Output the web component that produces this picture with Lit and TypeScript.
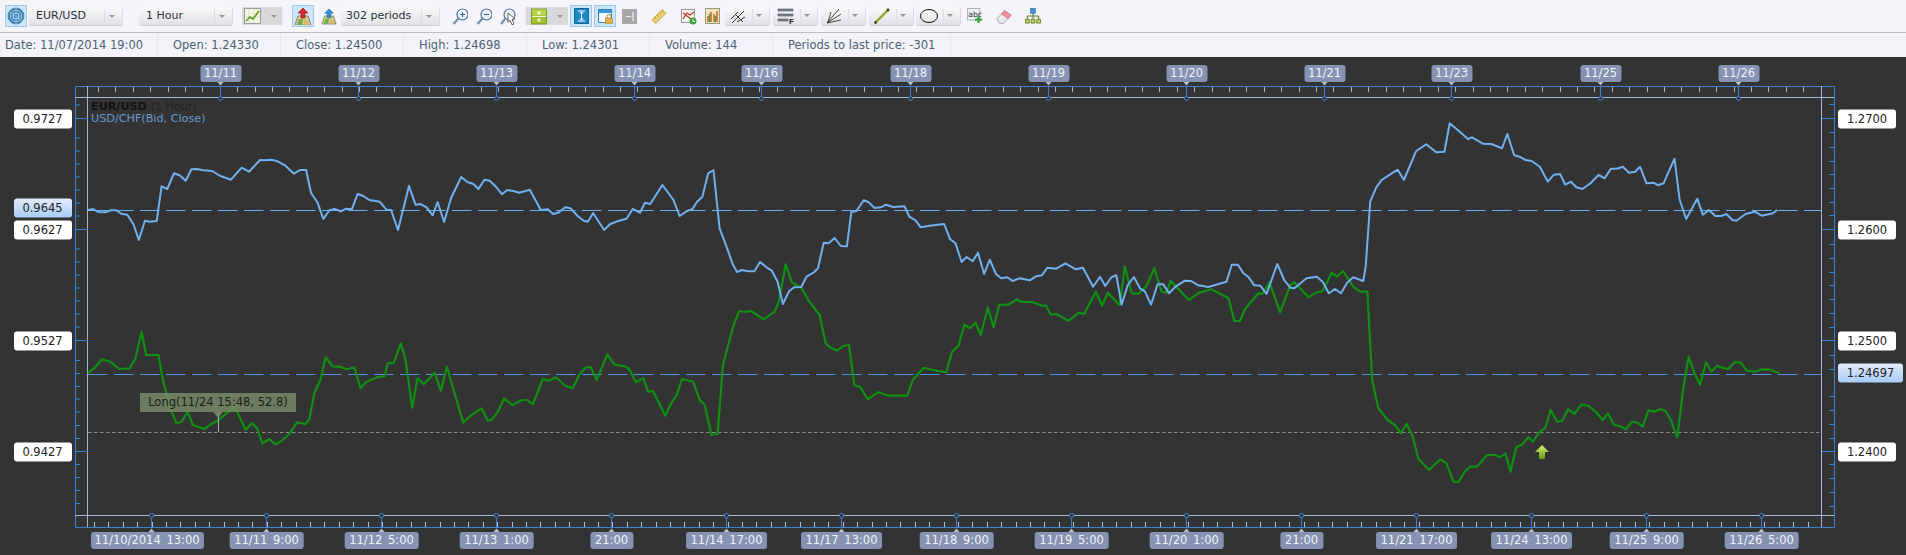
import { LitElement, css, html, svg } from 'lit';
import { customElement } from 'lit/decorators.js';

type Pt = [number, number];

// series were read off crops: 2.45x (or 2.465x on the right side) horizontally, 3x vertically
const crop = (ox: number, oy: number, pts: number[], sx = 2.45): Pt[] => {
  const out: Pt[] = [];
  for (let i = 0; i < pts.length; i += 2) out.push([ox + pts[i] / sx, oy + pts[i + 1] / 3]);
  return out;
};

const BLUE: Pt[] = [
  ...crop(0, 130, [215,240,228,237,240,246,258,247,272,241,285,241,297,251,312,254,327,283,340,330,355,272,367,275,384,273,396,169,410,177,426,130,440,136,455,152,469,118,482,117,498,121,520,123,540,138,566,149,592,113,610,125,637,90,650,91,665,89,680,94,698,106,720,131,735,120,750,120,762,188,778,218,792,267,807,241,820,237,835,244,848,236,862,238,876,192,890,198,905,210,930,215,947,239,958,240,975,300,1002,168,1018,224,1030,222,1045,232,1060,256,1072,216,1088,276,1105,205,1130,141,1145,156,1160,162,1172,177,1187,149,1200,152,1215,170,1230,193,1243,180,1258,183,1272,188,1298,179,1325,240,1342,238,1355,252,1368,248,1385,232,1398,235,1415,258,1430,272,1440,275,1453,249,1480,300,1495,282,1515,273,1535,266,1550,237,1568,248]),
  ...crop(640, 130, [12,218,25,222,55,165,82,210,97,258,115,243,128,238,140,215,153,200,167,130,180,120,195,295,212,350,228,405,238,426,250,420,265,424,280,424,294,396,310,412,323,422,337,455,350,522,365,484,378,472,395,471,408,440,425,428,436,415,450,338,462,340,477,324,492,348,507,349,518,245,530,244,548,211,560,217,575,234,590,232,603,224,620,231,648,229,660,260,675,271,688,292,710,287,745,282,760,328,773,340,788,396,800,381,815,394,828,368,843,432,857,389,872,432,885,445,900,442,913,453,930,445,955,451,970,439,985,436,998,413,1020,416,1042,400,1068,418,1085,413,1110,470,1127,440,1140,468,1155,442,1167,436,1180,524,1195,465,1210,441,1225,475,1237,484,1252,524,1268,463,1282,463,1296,490,1312,470,1335,452,1350,453,1368,466,1392,471,1437,455,1450,404,1465,404,1478,430,1490,440,1505,466,1520,467,1535,492]),
  ...crop(1270, 100, [18,492,35,540,50,563,60,565,90,535,115,530,130,545,145,580,160,567,175,580,190,548,205,532,230,543,236,500,247,305,262,262,275,240,300,220,315,209,330,240,360,154,385,133,410,157,430,155,443,70,465,92,488,117,498,112,525,131,545,132,572,145,585,102,602,166,615,170,630,180,645,183,665,200,685,245,700,224,715,222,728,254,742,245,755,262,770,267,790,250,810,225,825,235,840,206,855,206,870,200,885,218,900,215,912,200,928,250,945,248,957,256,970,250,997,176,1010,300,1026,357,1053,296,1067,344,1082,330,1098,348,1112,348,1125,342,1140,360,1150,362,1172,342,1195,335,1212,347,1240,340,1250,330], 2.465),
];

const GREEN: Pt[] = [
  ...crop(0, 345, [215,85,232,68,250,43,270,50,292,72,318,70,332,40,347,-40,358,30,388,30,400,110,418,190,432,235,445,230,460,200,472,240,485,245,500,252,517,238,535,225,575,185,602,255,617,234,630,250,643,295,660,282,675,298,690,288,708,268,728,232,748,238,758,222,770,145,785,105,798,37,815,64,833,65,850,73,868,67,883,130,898,110,925,96,942,94,950,55,965,53,982,-5,993,40,1010,188,1023,100,1038,118,1065,83,1080,137,1095,65,1110,130,1135,233,1155,210,1180,190,1195,227,1205,224,1220,200,1235,160,1255,180,1280,165,1292,165,1305,178,1330,102,1345,107,1362,97,1385,122,1403,130,1420,88,1435,68,1447,66,1462,105,1488,28,1505,58,1530,64,1540,70,1558,112]),
  ...crop(640, 345, [8,100,20,140,32,138,62,212,75,178,90,150,103,102,130,110,147,167,158,178,175,270,190,267,203,60]),
  ...crop(640, 130, [228,590,243,543,258,546,272,543,303,568,330,545,340,515,357,403,372,457,395,473,415,515,440,555,455,640]),
  ...crop(640, 345, [463,5,483,17,497,3,512,0,525,120,540,127,558,163,583,142,610,152,655,152,668,105,695,68,725,77,750,82,765,20,780,2]),
  ...crop(640, 130, [795,583,808,595,822,578,835,615,852,533,866,592,880,525,905,523,922,508,935,516,960,516,985,527,995,527,1007,554,1020,552,1050,573,1075,548,1088,552,1117,485,1132,527,1146,488,1175,525,1188,410,1205,490,1220,492,1240,470,1260,415,1278,485,1290,488,1300,453,1345,510,1370,488,1400,478,1442,505,1456,573,1470,573,1482,538,1515,490,1525,492,1542,457]),
  ...crop(1270, 100, [25,637,50,555,60,547,95,592,110,580,130,573,152,518,165,530,180,513,205,560,222,575,240,575], 2.465),
  ...crop(1270, 330, [245,0,252,150,267,235,290,270,308,285,323,310,337,282,352,320,365,385,392,420,420,388,435,400,452,455,465,456,480,425,493,410,510,410,535,375,555,375,567,382,580,370,593,425,607,352,620,345,637,322,648,335,665,305,678,295,692,240,708,275,720,273,735,237,750,252,768,223,785,228,805,248,820,270,833,250,848,285,862,288,877,298,892,275,905,278,919,290,933,240,948,245,962,237,975,243,988,270,1004,323,1018,180,1032,80,1045,125,1060,165,1075,97,1088,125,1102,107,1115,113,1130,117,1145,97,1160,97,1175,122,1195,125,1212,118,1230,118,1255,130], 2.465),
];

const LEFT_TICKS = [105,138,151,164,177,190,203,216,249,262,275,288,301,314,327,360.5,373.5,386.5,399,412,425.5,438.5,464.5,477.5,490.5,503.5];
const LEFT_VALUES: [string, number, boolean][] = [['0.9727',118.5,false],['0.9645',208,true],['0.9627',229.5,false],['0.9527',340.5,false],['0.9427',451.5,false]];
const RIGHT_TICKS = [104.5,132.5,147.5,161.5,174.5,188.5,202.5,215.5,244.5,258.5,272.5,285.5,299.5,313.5,327.5,355.5,369.5,396.5,410.5,424.5,438.5,464.5,478.5,492.5,506.5];
const RIGHT_VALUES: [string, number, boolean][] = [['1.2700',118.5,false],['1.2600',229.5,false],['1.2500',340.5,false],['1.24697',372.5,true],['1.2400',451.5,false]];
const TOP_LABELS: [string, number][] = [['11/11',220.5],['11/12',358.5],['11/13',496.5],['11/14',634.5],['11/16',761.5],['11/18',910.5],['11/19',1048.5],['11/20',1186.5],['11/21',1324.5],['11/23',1451.5],['11/25',1600.5],['11/26',1738.5]];
const BOTTOM_LABELS: [string, number][] = [['11/10/2014 13:00',151.5],['11/11 9:00',266.5],['11/12 5:00',381.5],['11/13 1:00',496.5],['21:00',611.5],['11/14 17:00',726.5],['11/17 13:00',841.5],['11/18 9:00',956.5],['11/19 5:00',1071.5],['11/20 1:00',1186.5],['21:00',1301.5],['11/21 17:00',1416.5],['11/24 13:00',1531.5],['11/25 9:00',1646.5],['11/26 5:00',1761.5]];

const steps = (from: number, to: number, step: number) => {
  const out: number[] = [];
  for (let v = from; v < to; v += step) out.push(Math.round(v) + 0.5);
  return out;
};
const toPoints = (pts: Pt[]) => pts.map(([x, y]) => `${x.toFixed(1)},${y.toFixed(1)}`).join(' ');

const ICONS = {
  globe: svg`<circle cx="9" cy="9" r="8" fill="#3f7fb5" stroke="#6f8fa8"/><circle cx="9" cy="9" r="5.5" fill="none" stroke="#a9d3ea" stroke-width="1"/><circle cx="9" cy="9" r="3" fill="none" stroke="#c9e4f2" stroke-width="1"/><path d="M3 5l12 9M9 1v16" stroke="#8cc0de" stroke-width=".8"/>`,
  line: svg`<rect x=".5" y=".5" width="16" height="15" fill="#f4f6e4" stroke="#9a9a9a"/><path d="M1 9h15M5 1v14M10 1v14" stroke="#d5d8c4" stroke-width=".7"/><path d="M2 13l4-4 3 2 6-8" fill="none" stroke="#5c9a1e" stroke-width="1.6"/>`,
  mapUp: svg`<path d="M1 18l3-9h10l3 9z" fill="#d6c98c" stroke="#7b8a6a"/><path d="M3 18l2-6h4l-1 6z" fill="#6fae4b"/><path d="M11 18l-1-5h3l2 5z" fill="#d9b56a"/><path d="M9 1l5 5h-3v5H7V6H4z" fill="#d8262c" stroke="#8e1a1a" stroke-width=".6"/>`,
  mapBlue: svg`<path d="M1 18l3-9h10l3 9z" fill="#d6c98c" stroke="#7b8a6a"/><path d="M3 18l2-6h4l-1 6z" fill="#6fae4b"/><path d="M11 18l-1-5h3l2 5z" fill="#d9b56a"/><path d="M9 1l5 5h-3v5H7V6H4z" fill="#2f8fd0" stroke="#1c5f92" stroke-width=".6"/>`,
  zoomIn: svg`<circle cx="10.5" cy="6.5" r="5.5" fill="#eef3fa" stroke="#4f6f9c" stroke-width="1.2"/><path d="M8 6.5h5M10.5 4v5" stroke="#3f6396" stroke-width="1.1"/><path d="M6.5 10.5L1.5 16" stroke="#7d8ea8" stroke-width="2.2"/>`,
  zoomOut: svg`<circle cx="10.5" cy="6.5" r="5.5" fill="#eef3fa" stroke="#4f6f9c" stroke-width="1.2"/><path d="M8 6.5h5" stroke="#3f6396" stroke-width="1.1"/><path d="M6.5 10.5L1.5 16" stroke="#7d8ea8" stroke-width="2.2"/>`,
  zoomFit: svg`<circle cx="9.5" cy="6.5" r="5.5" fill="#eef3fa" stroke="#4f6f9c" stroke-width="1.2"/><path d="M5.5 10.5L1 16" stroke="#7d8ea8" stroke-width="2.2"/><path d="M8 5l7 6-3 .5 2 4.5-2 .8-2-4.5-2 2z" fill="#fff" stroke="#333" stroke-width=".8"/>`,
  split: svg`<rect x=".5" y="1" width="15" height="15" fill="#9fc02f" stroke="#7c9a1f"/><rect x="1" y="1.5" width="14" height="6" fill="#b6d44a"/><path d="M1 8.5h14" stroke="#f4f4e0" stroke-width="1"/><path d="M6 5h4M8 3v4M6 12h4M8 10v4" stroke="#fff" stroke-width="1"/>`,
  fit: svg`<rect x=".5" y=".5" width="14" height="15" fill="#1c88c4" stroke="#0f679b"/><path d="M4 3h7M4 13h7M7.5 4v8M5.8 5.5l1.7-1.7 1.7 1.7M5.8 10.5l1.7 1.7 1.7-1.7" fill="none" stroke="#fff" stroke-width="1"/>`,
  lock: svg`<rect x=".5" y="1.5" width="13" height="13" fill="#f6fbff" stroke="#2f86c4"/><rect x="1" y="2" width="12" height="3" fill="#3f98d4"/><path d="M9 10V8.5a2 2 0 014 0V10" fill="none" stroke="#a9812a"/><rect x="7.5" y="10" width="7" height="6" fill="#e3b04b" stroke="#a9812a" stroke-width=".6"/>`,
  panel: svg`<rect x="0" y="0" width="15" height="15" fill="#a7a7a7"/><path d="M4 7.5h5M11 3v9" stroke="#f2f2f2" stroke-width="1.2"/>`,
  ruler: svg`<path d="M1 12L12 1l4 4L5 16z" fill="#ecd26a" stroke="#b3952e" stroke-width=".8"/><path d="M4 9.5l1.5 1.5M6.5 7l1.5 1.5M9 4.5l1.5 1.5M11.5 2.5L13 4" stroke="#8a7420" stroke-width=".8"/>`,
  cross: svg`<rect x=".5" y="1.5" width="13" height="13" fill="#f3f3ec" stroke="#9c9c9c"/><path d="M2 5l8 6M2 11l4-6 3 2 4-3" fill="none" stroke="#c0392b" stroke-width="1.2"/><circle cx="12" cy="13" r="3.5" fill="#3da53d"/><path d="M12 11v2.5h2" fill="none" stroke="#fff" stroke-width=".9"/>`,
  bars: svg`<rect x=".5" y=".5" width="14" height="15" fill="#ece6bf" stroke="#9a9a80"/><path d="M3 14V8M6 14V4M9 14V6M12 14V3" stroke="#d06a2a" stroke-width="1.6"/><path d="M4.5 14V6M10.5 14V8" stroke="#4d9a3a" stroke-width="1.4"/>`,
  fork: svg`<path d="M3 16L15 4M6 7l8 8M2 12l7-7M8 15l8-5" fill="none" stroke="#333" stroke-width="1"/>`,
  lines: svg`<path d="M1 2h15v2H1zM1 7h15v2H1zM1 12h10v2H1z" fill="#7f8a96" stroke="#44505c" stroke-width=".6"/><text x="12" y="17" font-size="8" font-weight="700" font-family="Liberation Sans" fill="#222">F</text>`,
  fan: svg`<path d="M2 16L14 2M2 16L16 7M2 16L16 13M6 5l-3 10" fill="none" stroke="#333" stroke-width=".9"/>`,
  pencil: svg`<path d="M2 16L15 3" stroke="#8fa624" stroke-width="2.4"/><circle cx="2.5" cy="15.5" r="1.4" fill="#3a4a10"/><circle cx="15" cy="3" r="1.4" fill="#3a4a10"/>`,
  ellipse: svg`<ellipse cx="9" cy="9" rx="8.5" ry="6.5" fill="none" stroke="#111" stroke-width="1"/>`,
  abc: svg`<rect x=".5" y=".5" width="14" height="13" fill="#eef2f6" stroke="#a4adb8"/><text x="1.5" y="10" font-size="8.5" font-family="DejaVu Sans" fill="#222">abc</text><path d="M13 9v8M9 13h8" stroke="#3da53d" stroke-width="2.6"/>`,
  eraser: svg`<path d="M1 11l8-9 7 5-8 9H4z" fill="#eaeaee" stroke="#a9a9b3"/><path d="M9 2l7 5-3 4-7-5z" fill="#ee8f9b" stroke="#c76a78" stroke-width=".6"/>`,
  tree: svg`<rect x="6" y="0" width="5" height="5" fill="#3f8fd8" stroke="#21629f" stroke-width=".6"/><path d="M8.5 5v3M2.5 11V8h12v3M8.5 8v3" fill="none" stroke="#54701c"/><path d="M.5 11.5h4v4h-4zM6.5 11.5h4v4h-4zM12.5 11.5h4v4h-4z" fill="#c3d45a" stroke="#5c7a1a" stroke-width=".9"/>`,
};

const icon = (body: unknown, w = 18, h = 18) => html`<svg width=${w} height=${h} viewBox="0 0 ${w} ${h}">${body}</svg>`;
const caret = html`<span class="caret"></span>`;

@customElement('tool-bar')
export class ToolBar extends LitElement {
  static override styles = css`
    :host {
      display: flex;
      align-items: center;
      height: 32px;
      padding-left: 5px;
      background: #f5f4fa;
      border-bottom: 1px solid #bdbcc6;
      box-sizing: content-box;
      font: 11px 'DejaVu Sans', sans-serif;
      color: #2c3038;
    }
    .btn, .active, .flat, .combo, .split, .pick {
      display: flex;
      align-items: center;
      justify-content: center;
      flex: none;
      height: 19px;
      box-sizing: border-box;
    }
    .active {
      width: 22px;
      height: 22px;
      background: #cfe6fa;
      border: 1px solid #9ccbf0;
    }
    .flat { width: 16px; }
    .combo, .split {
      background: linear-gradient(#f9f9fb, #e2e2e6);
      border-bottom: 1px solid #cfcfd4;
      border-right: 1px solid #dcdce0;
      border-radius: 2px;
    }
    .combo { width: 94px; justify-content: flex-start; padding-left: 7px; position: relative; }
    .wide { width: 99px; padding-left: 5px; }
    .combo .caret { position: absolute; right: 7px; top: 8px; }
    .combo::after {
      content: '';
      position: absolute;
      right: 17px;
      top: 2px;
      bottom: 1px;
      width: 1px;
      background: #dcdce2;
    }
    .split { width: 45px; justify-content: space-between; padding: 0 7px 0 4px; position: relative; }
    .split::after {
      content: '';
      position: absolute;
      left: 27px;
      top: 2px;
      bottom: 1px;
      width: 1px;
      background: #dcdce2;
    }
    .pick {
      justify-content: space-between;
      padding: 0 5px 0 2px;
      background: #d9d9dc;
      height: 18px;
    }
    .pick-wide { width: 40px; }
    .pick-green { width: 42px; padding-left: 5px; }
    .caret {
      width: 0;
      height: 0;
      border: 3px solid transparent;
      border-top: 3px solid #94949b;
      border-bottom: 0;
      flex: none;
    }
    .m2 { margin-left: 2px; }
    .m3 { margin-left: 3px; }
    .m4 { margin-left: 4px; }
    .m5 { margin-left: 5px; }
    .m6 { margin-left: 6px; }
    .m7 { margin-left: 7px; }
    .m8 { margin-left: 8px; }
    .m9 { margin-left: 9px; }
    .m10 { margin-left: 10px; }
    .m12 { margin-left: 12px; }
    .m13 { margin-left: 13px; }
    .m14 { margin-left: 14px; }
    .m16 { margin-left: 16px; }
  `;

  override render() {
    return html`
      <span class="active">${icon(ICONS.globe)}</span>
      <span class="combo m2">EUR/USD${caret}</span>
      <span class="combo m16">1 Hour${caret}</span>
      <span class="pick pick-wide m9">${icon(ICONS.line, 17, 16)}${caret}</span>
      <span class="active m10">${icon(ICONS.mapUp)}</span>
      <span class="flat m7">${icon(ICONS.mapBlue)}</span>
      <span class="combo wide m4">302 periods${caret}</span>
      <span class="flat m12">${icon(ICONS.zoomIn, 16, 17)}</span>
      <span class="flat m8">${icon(ICONS.zoomOut, 16, 17)}</span>
      <span class="flat m8">${icon(ICONS.zoomFit, 16, 17)}</span>
      <span class="pick pick-green m10">${icon(ICONS.split, 16, 17)}${caret}</span>
      <span class="active m2">${icon(ICONS.fit, 15, 16)}</span>
      <span class="active m2">${icon(ICONS.lock, 15, 16)}</span>
      <span class="flat m5">${icon(ICONS.panel, 15, 15)}</span>
      <span class="flat m14">${icon(ICONS.ruler, 17, 17)}</span>
      <span class="flat m14">${icon(ICONS.cross, 16, 17)}</span>
      <span class="flat m7">${icon(ICONS.bars, 15, 16)}</span>
      <span class="split m5">${icon(ICONS.fork)}${caret}</span>
      <span class="split m3">${icon(ICONS.lines)}${caret}</span>
      <span class="split m3">${icon(ICONS.fan)}${caret}</span>
      <span class="split m3">${icon(ICONS.pencil)}${caret}</span>
      <span class="split m2">${icon(ICONS.ellipse)}${caret}</span>
      <span class="flat m6">${icon(ICONS.abc)}</span>
      <span class="flat m13">${icon(ICONS.eraser, 17, 17)}</span>
      <span class="flat m13">${icon(ICONS.tree, 17, 17)}</span>
    `;
  }
}

@customElement('info-bar')
export class InfoBar extends LitElement {
  static override styles = css`
    :host {
      display: grid;
      grid-template-columns: 158px repeat(5, 123px) 178px;
      justify-content: start;
      height: 24px;
      background: #f3f3f9;
      font: 11.5px 'DejaVu Sans', sans-serif;
      color: #4c5f74;
    }
    span {
      display: flex;
      align-items: center;
      padding-left: 15px;
      border-right: 1px solid #e7e7ee;
      white-space: nowrap;
    }
    span:first-child { padding-left: 5px; }
  `;

  override render() {
    return html`
      <span>Date: 11/07/2014 19:00</span>
      <span>Open: 1.24330</span>
      <span>Close: 1.24500</span>
      <span>High: 1.24698</span>
      <span>Low: 1.24301</span>
      <span>Volume: 144</span>
      <span>Periods to last price: -301</span>
    `;
  }
}

@customElement('price-chart')
export class PriceChart extends LitElement {
  static override styles = css`
    :host {
      display: block;
      position: relative;
      height: 498px;
      background: #333333;
      font: 11.5px 'DejaVu Sans', sans-serif;
      overflow: hidden;
    }
    svg { display: block; position: absolute; left: 0; top: 0; }
    .tag, .value, .tip, .legend { position: absolute; white-space: nowrap; }
    .tag {
      height: 17px;
      line-height: 17px;
      padding: 0 5px;
      transform: translateX(-50%);
      background: #8592b1;
      border-radius: 3px;
      color: #f2f4f8;
      word-spacing: 2px;
    }
    .first { padding: 0 4px; transform: translateX(calc(-50% - 4.5px)); }
    .top { width: 41px; padding: 0; text-align: center; box-sizing: border-box; }
    .value {
      width: 58px;
      height: 19px;
      line-height: 19px;
      text-align: center;
      background: #ffffff;
      border-radius: 3px;
      color: #222222;
      transform: translateY(-50%);
    }
    .current { background: linear-gradient(#e3edfc, #a8cbf9); }
    .wide { width: 65px; }
    .legend {
      left: 91px;
      top: 44px;
      font-size: 11.2px;
      line-height: 12px;
      color: #6798cf;
    }
    .legend b { color: #111111; }
    .legend i { font-style: normal; color: #222222; }
    .tip {
      left: 140px;
      top: 336px;
      width: 156px;
      height: 19px;
      line-height: 19px;
      text-align: center;
      background: rgba(124, 142, 106, 0.8);
      color: #1b2015;
    }
    .tip::after {
      content: '';
      position: absolute;
      left: 73px;
      top: 19px;
      border: 5px solid transparent;
      border-top: 6px solid rgba(124, 142, 106, 0.8);
      border-bottom: 0;
    }
  `;

  private axes() {
    const blue = '#3d80cf';
    const pale = '#a9b8d2';
    return svg`
      <path d="M75.5 86.5H1834.5V527.5H75.5Z" fill="none" stroke=${blue}/>
      <path d="M75 97.5H1834M75 515.5H1834M87.5 86V527M1821.5 86V527" stroke=${pale}/>
      ${steps(98, 1821, 17.4).map((x) => svg`<path d="M${x} 87V92" stroke="#aab6c8"/>`)}
      ${steps(94, 1821, 14.4).map((x) => svg`<path d="M${x} 522V527" stroke="#a4c0e4"/>`)}
      ${LEFT_TICKS.map((y) => svg`<path d="M75 ${y}H80" stroke=${blue}/>`)}
      ${RIGHT_TICKS.map((y) => svg`<path d="M1829 ${y}H1834" stroke=${blue}/>`)}
      ${LEFT_VALUES.filter((v) => !v[2]).map(([, y]) => svg`<path d="M75 ${y}H88" stroke=${blue}/>`)}
      ${RIGHT_VALUES.filter((v) => !v[2]).map(([, y]) => svg`<path d="M1822 ${y}H1834" stroke=${blue}/>`)}
      ${TOP_LABELS.map(([, x]) => svg`
        <path d="M${x} 86V97" stroke=${blue}/>
        <circle cx=${x} cy="98.5" r="2" fill="#333" stroke=${blue}/>
        <path d="M${x - 3} 82H${x + 3}L${x} 85.5Z" fill="#b3bdd1"/>`)}
      ${BOTTOM_LABELS.map(([, x]) => svg`
        <path d="M${x} 517V528" stroke=${blue}/>
        <circle cx=${x} cy="515.5" r="2.2" fill="#333" stroke=${blue}/>
        <path d="M${x - 3} 532H${x + 3}L${x} 528.5Z" fill="#b3bdd1"/>`)}
    `;
  }

  private series() {
    return svg`
      <path d="M88 210.5H1821" stroke="#6aaef0" stroke-dasharray="19.5 6.5"/>
      <path d="M88 374.5H1821" stroke="#4f94e0" stroke-dasharray="19.5 6.5"/>
      <path d="M88 432.5H1821" stroke="#8d8d8d" stroke-dasharray="3.5 2.5"/>
      <polyline points=${toPoints(GREEN)} fill="none" stroke="#0f9012" stroke-width="2.2" stroke-linejoin="round"/>
      <polyline points=${toPoints(BLUE)} fill="none" stroke="#70b0ee" stroke-width="2" stroke-linejoin="round"/>
      <path d="M218.5 412V432" stroke="#a8aca0"/>
      <defs>
        <linearGradient id="arrow" x1="0" y1="0" x2="0" y2="1">
          <stop offset="0" stop-color="#d9f26a"/>
          <stop offset="1" stop-color="#5f9a18"/>
        </linearGradient>
      </defs>
      <path d="M1542 445l7 7h-4v7h-6v-7h-4z" fill="url(#arrow)"/>
    `;
  }

  override render() {
    return html`
      <svg width="1906" height="498" viewBox="0 57 1906 498">${this.axes()}${this.series()}</svg>
      <div class="legend"><b>EUR/USD</b> <i>(1 Hour)</i><br />USD/CHF(Bid, Close)</div>
      ${TOP_LABELS.map(([t, x]) => html`<div class="tag top" style="left:${x}px;top:8px">${t}</div>`)}
      ${BOTTOM_LABELS.map(([t, x], i) => html`<div class="tag ${i === 0 ? 'first' : ''}" style="left:${x}px;top:475px">${t}</div>`)}
      ${LEFT_VALUES.map(([t, y, cur]) => html`<div class="value ${cur ? 'current' : ''}" style="left:13.5px;top:${y - 57}px">${t}</div>`)}
      ${RIGHT_VALUES.map(([t, y, cur]) => html`<div class="value ${cur ? 'current wide' : ''}" style="left:1838px;top:${y - 57}px">${t}</div>`)}
      <div class="tip">Long(11/24 15:48, 52.8)</div>
    `;
  }
}

@customElement('app-root')
export class AppRoot extends LitElement {
  static override styles = css`
    :host {
      display: block;
      width: 100%;
      height: 555px;
      overflow: hidden;
    }
  `;

  override render() {
    return html`<tool-bar></tool-bar><info-bar></info-bar><price-chart></price-chart>`;
  }
}

declare global {
  interface HTMLElementTagNameMap {
    'app-root': AppRoot;
    'tool-bar': ToolBar;
    'info-bar': InfoBar;
    'price-chart': PriceChart;
  }
}
